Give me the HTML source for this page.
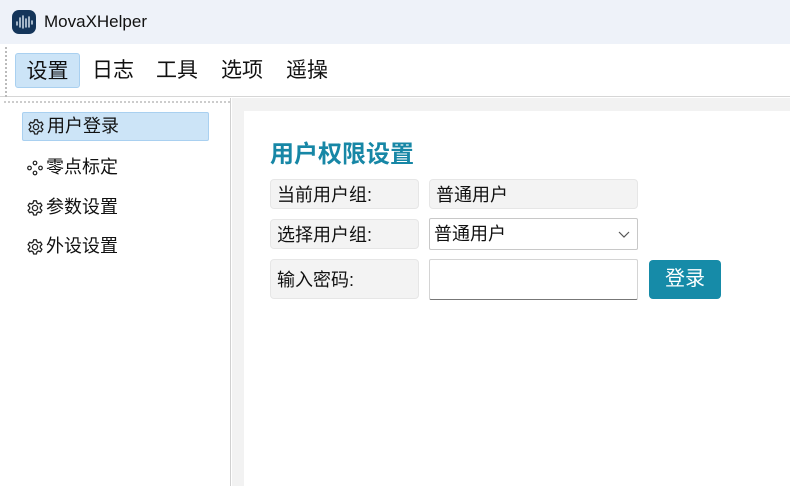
<!DOCTYPE html>
<html><head><meta charset="utf-8"><style>
*{margin:0;padding:0;box-sizing:border-box}
body{width:790px;height:486px;overflow:hidden;background:#fff;font-family:"Liberation Sans","Microsoft YaHei","Noto Sans CJK SC",sans-serif;position:relative;color:#111}
.abs{position:absolute}
.tb{left:0;top:0;width:790px;height:44px;background:#eef2f9}
.menu{left:0;top:44px;width:790px;height:53px;background:#fff;border-bottom:1px solid #d6d6d6}
.mi{top:53px;height:35px;font-size:21px;line-height:35px;text-align:center}
.side{left:0;top:98px;width:231px;height:388px;background:#fff;border-right:1px solid #d0d0d0}
.si{left:22px;width:187px;height:29px;font-size:18px;line-height:29px;padding-left:4px;display:flex;align-items:center}
.si svg{margin-right:2px}
.lbl{left:270px;width:149px;background:#f3f3f3;border:1px solid #e6e6e6;border-radius:4px;font-size:18px;padding-left:6px;display:flex;align-items:center}
</style></head><body>
<div class="abs tb"></div>
<svg class="abs" style="left:12px;top:10px" width="24" height="24" viewBox="0 0 24 24"><rect width="24" height="24" rx="7" fill="#14355a"/><path d="M5 12v3M8 8v9M11 6v12M14 9v8M17 7v10M20 11v3" stroke="#dfeaf5" stroke-width="1.4" stroke-linecap="round" fill="none"/></svg>
<div class="abs" style="left:44px;top:10px;font-size:17px;line-height:24px">MovaXHelper</div>
<div class="abs menu"></div>
<div class="abs" style="left:5px;top:47px;height:50px;border-left:2px dotted #bbb"></div>
<div class="abs mi" style="left:15px;width:65px;background:#cce4f7;border:1px solid #a9d0f0;border-radius:3px">设置</div>
<div class="abs mi" style="left:90px;width:46px">日志</div>
<div class="abs mi" style="left:154px;width:46px">工具</div>
<div class="abs mi" style="left:219px;width:46px">选项</div>
<div class="abs mi" style="left:284px;width:46px">遥操</div>
<div class="abs side"></div>
<div class="abs" style="left:4px;top:101px;width:226px;border-top:2px dotted #ccc"></div>
<div class="abs" style="left:232px;top:98px;width:558px;height:388px;background:#f2f2f2"></div>
<div class="abs" style="left:244px;top:111px;width:546px;height:375px;background:#fff"></div>
<svg width="0" height="0" style="position:absolute"><defs><g id="gear"><circle cx="9" cy="9" r="2.6" fill="none" stroke="#222" stroke-width="1.3"/><path d="M7.6 1.8h2.8l.5 2.1 1.6.9 2-.7 1.4 2.4-1.6 1.5v1.8l1.6 1.5-1.4 2.4-2-.7-1.6.9-.5 2.1H7.6l-.5-2.1-1.6-.9-2 .7-1.4-2.4 1.6-1.5V8.2L2.1 6.7l1.4-2.4 2 .7 1.6-.9z" fill="none" stroke="#222" stroke-width="1.3" stroke-linejoin="round"/></g></defs></svg>
<div class="abs si" style="top:112px;background:#cce4f7;border:1px solid #a9d0f0;border-radius:2px"><svg width="18" height="18"><use href="#gear"/></svg>用户登录</div>
<div class="abs si" style="top:153px"><svg width="18" height="18"><circle cx="9" cy="4" r="1.8" fill="none" stroke="#222" stroke-width="1.2"/><circle cx="3.5" cy="9" r="1.8" fill="none" stroke="#222" stroke-width="1.2"/><circle cx="14.5" cy="9" r="1.8" fill="none" stroke="#222" stroke-width="1.2"/><circle cx="9" cy="14" r="1.8" fill="none" stroke="#222" stroke-width="1.2"/></svg>零点标定</div>
<div class="abs si" style="top:193px"><svg width="18" height="18"><use href="#gear"/></svg>参数设置</div>
<div class="abs si" style="top:232px"><svg width="18" height="18"><use href="#gear"/></svg>外设设置</div>
<div class="abs" style="left:270px;top:139px;font-size:24px;font-weight:bold;color:#1787a6;line-height:32px">用户权限设置</div>
<div class="abs lbl" style="top:179px;height:30px">当前用户组:</div>
<div class="abs lbl" style="top:219px;height:30px">选择用户组:</div>
<div class="abs lbl" style="top:259px;height:40px">输入密码:</div>
<div class="abs lbl" style="left:429px;width:209px;top:179px;height:30px">普通用户</div>
<div class="abs" style="left:429px;top:218px;width:209px;height:32px;border:1px solid #c8c8c8;border-radius:2px;background:#fff;font-size:18px;line-height:31px;padding-left:4px">普通用户<svg style="position:absolute;right:7px;top:12px" width="12" height="8"><path d="M1 1l5 5 5-5" stroke="#555" fill="none" stroke-width="1.2"/></svg></div>
<div class="abs" style="left:429px;top:259px;width:209px;height:41px;border:1px solid #d4d4d4;border-bottom:1px solid #777;border-radius:2px;background:#fff"></div>
<div class="abs" style="left:649px;top:260px;width:72px;height:39px;background:#168ba8;border-radius:4px;color:#fff;font-size:20px;line-height:39px;text-align:center">登录</div>
</body></html>
